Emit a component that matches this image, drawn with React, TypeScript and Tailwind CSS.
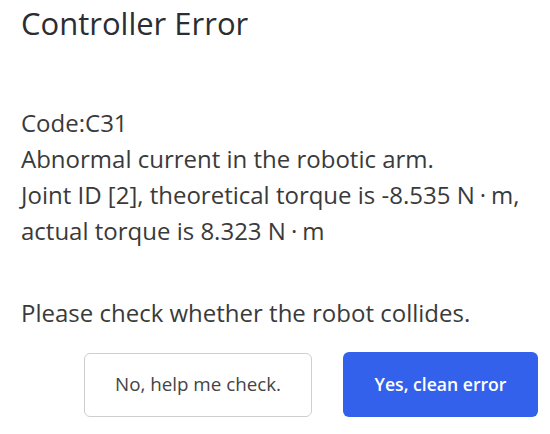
function Nm() {
  return (
    <>
      N<span className="px-[5px]">·</span>m
    </>
  );
}

export default function App() {
  return (
    <div
      className="w-[550px] h-[434px] bg-white overflow-hidden flex flex-col"
      style={{ fontFamily: "'Open Sans', 'Noto Sans', sans-serif" }}
    >
      <h1 className="pl-[21px] pt-[5px] text-[31px] leading-[36px] text-[#2a2d33]">
        Controller Error
      </h1>
      <div className="pl-[21px] mt-[64px] text-[24px] leading-[36px] text-[#3a3a3a]">
        <p>Code:C31</p>
        <p>Abnormal current in the robotic arm.</p>
        <p>
          Joint ID [2], theoretical torque is -8.535 <Nm />,
        </p>
        <p>
          actual torque is 8.323 <Nm />
        </p>
        <p className="mt-[46px]">Please check whether the robot collides.</p>
      </div>
      <div className="flex items-center gap-[31px] pl-[84px] mt-[21px]">
        <button className="w-[228px] h-[64px] rounded-[6px] border border-[#cfcfcf] bg-white text-[18.8px] text-[#444]">
          No, help me check.
        </button>
        <button className="w-[195px] h-[65px] rounded-[6px] bg-[#3461eb] text-[17.6px] font-semibold text-white">
          Yes, clean error
        </button>
      </div>
    </div>
  );
}
